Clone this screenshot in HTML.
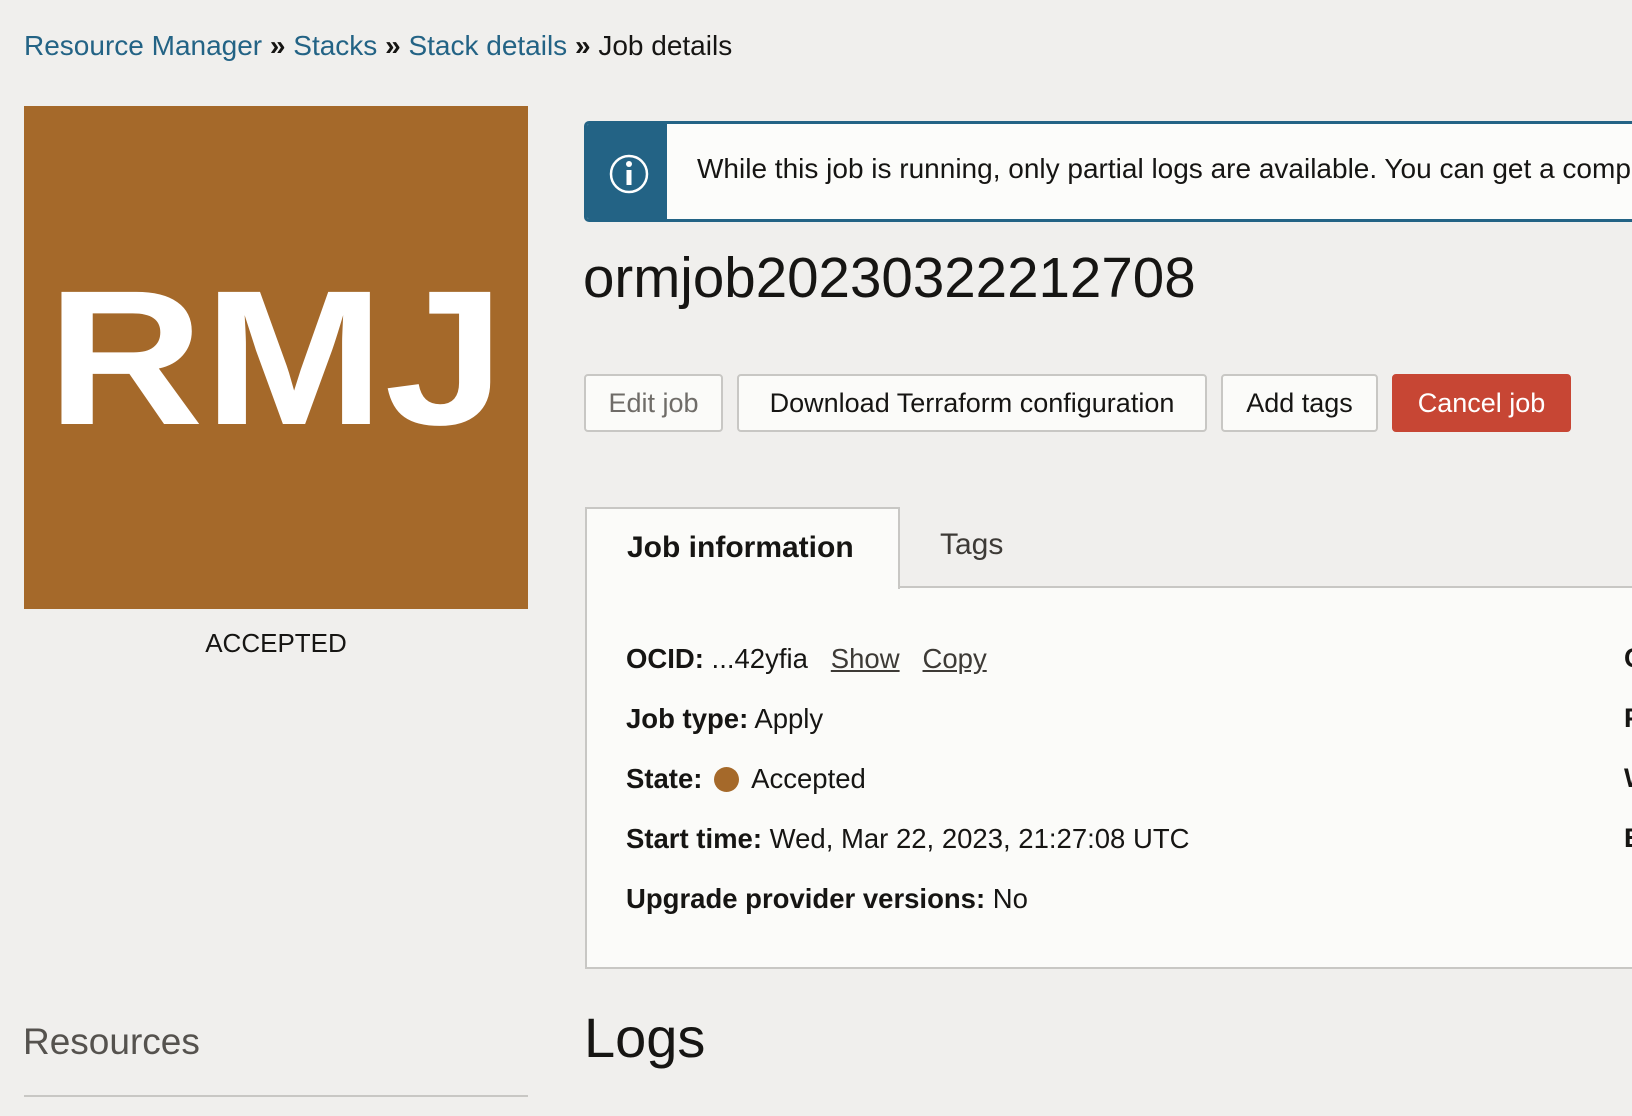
<!DOCTYPE html>
<html><head><meta charset="utf-8"><style>
*{margin:0;padding:0;box-sizing:border-box}
html,body{width:1632px;height:1116px;overflow:hidden;background:#f0efed;font-family:"Liberation Sans",Arial,sans-serif;color:#161513;position:relative}
.a{position:absolute;white-space:nowrap}
.bc{left:24px;top:30px;font-size:28px}
.bc a{color:#236385;text-decoration:none}
.bc i{font-style:normal;font-weight:bold}
.rmj{left:24px;top:106px;width:504px;height:503px;background:#a5692a;overflow:hidden}
.rmj span{position:absolute;left:0;width:504px;top:0;line-height:503px;text-align:center;color:#fff;font-weight:bold;font-size:192px;transform:scaleX(1.13)}
.acc{left:24px;width:504px;text-align:center;top:628px;font-size:26px}
.ban{left:584px;top:121px;width:1100px;height:101px;border:3px solid #236385;border-radius:5px;background:#fcfcfa;overflow:hidden}
.ban .ic{position:absolute;left:0;top:0;width:80px;height:100%;background:#236385}
.ban .t{position:absolute;left:110px;top:29px;font-size:28px}
.title{left:583px;top:245px;font-size:56.5px}
.btn{top:374px;height:58px;border:2px solid #c8c7c4;border-radius:4px;background:#fbfbf9;font-size:27px;line-height:54px;text-align:center}
.tab{left:585px;top:507px;width:315px;height:82px;border:2px solid #c8c7c4;border-bottom:none;background:#fbfbf9;font-size:30px;font-weight:bold;padding:22px 0 0 40px;z-index:2}
.panel{left:585px;top:586px;width:1100px;height:383px;border:2px solid #c8c7c4;background:#fbfbf9}
.row{left:626px;font-size:27.5px}
.row u{color:#3d3a36}
</style></head><body>
<div class="a bc"><a>Resource Manager</a> <i>»</i> <a>Stacks</a> <i>»</i> <a>Stack details</a> <i>»</i> Job details</div>
<div class="a rmj"><span>RMJ</span></div>
<div class="a acc">ACCEPTED</div>
<div class="a ban"><div class="ic"><svg width="80" height="95" viewBox="0 0 80 95"><circle cx="42" cy="50" r="18" fill="none" stroke="#fff" stroke-width="2.5"/><rect x="39.5" y="46" width="5" height="15" fill="#fff"/><circle cx="42" cy="40" r="3" fill="#fff"/></svg></div><div class="t">While this job is running, only partial logs are available. You can get a complete log when the job finishes.</div></div>
<div class="a title">ormjob20230322212708</div>
<div class="a btn" style="left:584px;width:139px;color:#6f6c68">Edit job</div>
<div class="a btn" style="left:737px;width:470px">Download Terraform configuration</div>
<div class="a btn" style="left:1221px;width:157px">Add tags</div>
<div class="a btn" style="left:1392px;width:179px;background:#c74634;border-color:#c74634;color:#fff">Cancel job</div>
<div class="a panel"></div>
<div class="a tab">Job information</div>
<div class="a" style="left:940px;top:528px;font-size:30px;color:#3d3a36">Tags</div>
<div class="a row" style="top:643px"><b>OCID:</b> ...42yfia &nbsp; <u>Show</u> &nbsp; <u>Copy</u></div>
<div class="a row" style="top:703px"><b>Job type:</b> Apply</div>
<div class="a row" style="top:763px"><b>State:</b> <span style="display:inline-block;width:25px;height:25px;border-radius:50%;background:#a5692a;vertical-align:-4px;margin:0 6px 0 4px"></span> Accepted</div>
<div class="a row" style="top:823px"><b>Start time:</b> Wed, Mar 22, 2023, 21:27:08 UTC</div>
<div class="a row" style="top:883px"><b>Upgrade provider versions:</b> No</div>
<div class="a" style="left:1624px;top:628px;font-size:27px;font-weight:bold;line-height:60px">Compartment<br>Plan job<br>Working directory<br>End time</div>
<div class="a" style="left:584px;top:1005px;font-size:56px">Logs</div>
<div class="a" style="left:23px;top:1021px;font-size:37px;color:#55524e;font-weight:300">Resources</div>
<div class="a" style="left:24px;top:1095px;width:504px;height:2px;background:#c8c7c4"></div>
</body></html>
